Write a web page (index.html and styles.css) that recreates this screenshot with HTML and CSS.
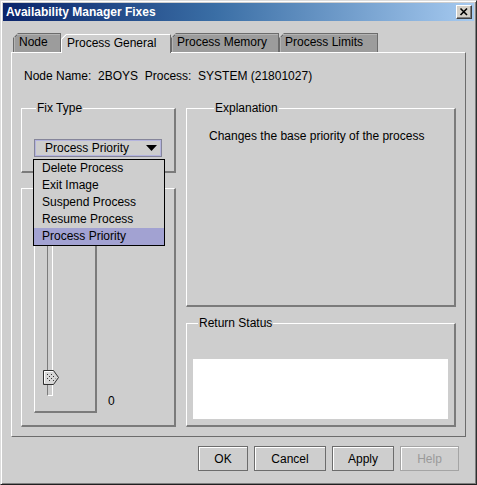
FILE: index.html
```html
<!DOCTYPE html>
<html lang="en">
<head>
    <meta charset="UTF-8">
    <title>Availability Manager Fixes</title>
    <link rel="stylesheet" href="styles.css">
</head>
<body>
    <div class="window">
        <div class="titlebar">
            <span class="title">Availability Manager Fixes</span>
            <span class="close">
                <svg width="14" height="12" viewBox="0 0 14 12">
                    <path d="M3.5 2.5 L10 9 M10 2.5 L3.5 9" stroke="#000" stroke-width="1.6" fill="none"/>
                </svg>
            </span>
        </div>

        <div class="client">
            <div class="tabs">
                <div class="tab tab-node">Node</div>
                <div class="tab selected tab-general">Process General</div>
                <div class="tab tab-memory">Process Memory</div>
                <div class="tab tab-limits">Process Limits</div>
            </div>

            <div class="panel">
                <div class="info">Node Name:&nbsp; 2BOYS&nbsp; Process:&nbsp; SYSTEM (21801027)</div>

                <div class="columns">
                    <div class="col">
                        <fieldset class="group fix-type">
                            <legend>Fix Type</legend>
                            <div class="combo-wrap">
                                <div class="combo">
                                    <span>Process Priority</span>
                                    <svg class="arrow" width="11" height="6" viewBox="0 0 11 6">
                                        <polygon points="0,0 11,0 5.5,6" fill="#000"/>
                                    </svg>
                                </div>
                                <ul class="popup">
                                    <li>Delete Process</li>
                                    <li>Exit Image</li>
                                    <li>Suspend Process</li>
                                    <li>Resume Process</li>
                                    <li class="active">Process Priority</li>
                                </ul>
                            </div>
                        </fieldset>

                        <fieldset class="group fix-value">
                            <legend>Fix Value</legend>
                            <div class="slider-row">
                                <div class="slider-box">
                                    <div class="track">
                                        <svg class="thumb" width="16" height="15" viewBox="0 0 16 15">
                                            <defs>
                                                <pattern id="dots" width="4" height="4" patternUnits="userSpaceOnUse">
                                                    <rect x="0" y="0" width="1" height="1" fill="#333"/>
                                                    <rect x="2" y="2" width="1" height="1" fill="#333"/>
                                                </pattern>
                                            </defs>
                                            <polygon points="0.5,0.5 10.5,0.5 15.5,7.5 10.5,14.5 0.5,14.5" fill="#d8d8d8" stroke="#303030"/>
                                            <path d="M1.5 13 V1.5 H10" stroke="#fff" fill="none"/>
                                            <polygon points="3,3 10,3 13,7.5 10,12 3,12" fill="url(#dots)"/>
                                        </svg>
                                    </div>
                                </div>
                                <span class="value">0</span>
                            </div>
                        </fieldset>
                    </div>

                    <div class="col">
                        <fieldset class="group explanation">
                            <legend>Explanation</legend>
                            <p>Changes the base priority of the process</p>
                        </fieldset>

                        <fieldset class="group status">
                            <legend>Return Status</legend>
                            <div class="status-box"></div>
                        </fieldset>
                    </div>
                </div>
            </div>

            <div class="buttons">
                <button class="btn btn-ok">OK</button>
                <button class="btn btn-cancel">Cancel</button>
                <button class="btn btn-apply">Apply</button>
                <button class="btn btn-help" disabled>Help</button>
            </div>
        </div>
    </div>
</body>
</html>
```

FILE: styles.css
```css
body {
    margin: 0;
    font-family: 'Liberation Sans', Arial, sans-serif;
    font-size: 12px;
    color: #000;
    background: #cecece;
}
.window {
    width: 477px;
    height: 485px;
    box-sizing: border-box;
    padding: 2px;
    background: #cecece;
    border: 1px solid;
    border-color: #dcdcdc #303030 #202020 #dcdcdc;
    box-shadow: inset 1px 1px 0 #fff, inset -1px -1px 0 #808080;
}
.titlebar {
    height: 18px;
    display: flex;
    align-items: center;
    justify-content: space-between;
    padding: 0 2px 0 3px;
    background: linear-gradient(to right, #0a246a 0%, #3a6ea5 45%, #a6caf0 100%);
}
.title {
    color: #fff;
    font-weight: bold;
    font-size: 12px;
    line-height: 18px;
}
.close {
    width: 16px;
    height: 14px;
    box-sizing: border-box;
    display: flex;
    align-items: center;
    justify-content: center;
    background: #d4d0c8;
    border: 1px solid;
    border-color: #fff #404040 #404040 #fff;
    box-shadow: inset -1px -1px 0 #808080;
}
.client {
    padding-top: 12px;
}
.tabs {
    display: flex;
    align-items: flex-end;
    height: 19px;
    margin: 0 8px 0 10px;
}
.tab {
    height: 19px;
    box-sizing: border-box;
    padding-left: 5px;
    line-height: 17px;
    white-space: nowrap;
    border: 1px solid #6c6c6c;
    border-bottom: 0;
    background: linear-gradient(135deg, transparent 3.5px, #6c6c6c 3.5px, #6c6c6c 4.4px, #9c9c9c 4.4px);
    background-origin: border-box;
    clip-path: polygon(5px 0, 100% 0, 100% 100%, 0 100%, 0 5px);
    box-shadow: inset 1px 1px 0 #b4b4b4;
}
.tab.selected {
    position: relative;
    z-index: 1;
    height: 19px;
    margin-bottom: -1px;
    border-color: #fff #6c6c6c #6c6c6c #fff;
    background: linear-gradient(135deg, transparent 3.5px, #fff 3.5px, #fff 4.4px, #cecece 4.4px);
    background-origin: border-box;
    box-shadow: none;
}
.tab-node { width: 48px; }
.tab-general { width: 110px; }
.tab-memory { width: 108px; }
.tab-limits { width: 99px; }

.panel {
    height: 385px;
    box-sizing: border-box;
    margin: 0 8px;
    padding: 16px 8px 9px 9px;
    border: 1px solid;
    border-color: #fff #6c6c6c #6c6c6c #fff;
}
.info {
    line-height: 14px;
    padding-left: 3px;
}
.columns {
    display: grid;
    grid-template-columns: 155px 270px;
    column-gap: 10px;
    height: 326px;
    margin-top: 18px;
}
.col {
    display: flex;
    flex-direction: column;
}
.group {
    margin: 0;
    padding: 0;
    min-width: 0;
    box-sizing: border-box;
    border-style: solid;
    border-width: 1px 2px 2px 1px;
    border-color: #fff #7b7b7b #7b7b7b #fff;
}
.group legend {
    padding: 0 1px;
    margin-left: 2px;
    line-height: 14px;
}
.fix-type {
    height: 72px;
    padding: 24px 0 0 12px;
}
.fix-value {
    flex: 1;
    margin-top: 8px;
    padding: 10px 0 12px 12px;
    display: flex;
    flex-direction: column;
}
.explanation {
    height: 206px;
    padding: 14px 0 0 22px;
}
.explanation legend,
.status legend {
    margin-left: 5px;
}
.explanation p {
    margin: 0;
    line-height: 14px;
}
.status {
    flex: 1;
    margin-top: 9px;
    padding: 6px;
    display: flex;
    flex-direction: column;
}
.status-box {
    margin-top: auto;
    height: 60px;
    background: #fff;
}

.combo-wrap {
    position: relative;
    width: 128px;
}
.combo {
    height: 18px;
    box-sizing: border-box;
    display: flex;
    align-items: center;
    justify-content: space-between;
    padding: 0 4px 0 10px;
    border: 1px solid #85859a;
    box-shadow: inset 0 0 0 1px #b4b4de;
    line-height: 14px;
}
.popup {
    position: absolute;
    top: 20px;
    left: -1px;
    z-index: 10;
    width: 132px;
    box-sizing: border-box;
    margin: 0;
    padding: 0;
    list-style: none;
    background: #cecece;
    border: 1px solid #000;
}
.popup li {
    height: 17px;
    line-height: 17px;
    padding-left: 8px;
}
.popup li.active {
    background: #a2a2d2;
}

.slider-row {
    flex: 1;
    display: flex;
}
.slider-box {
    width: 63px;
    box-sizing: border-box;
    display: flex;
    padding: 8px 0 15px 12px;
    border-style: solid;
    border-width: 1px 2px 2px 1px;
    border-color: #fff #7b7b7b #7b7b7b #fff;
}
.track {
    position: relative;
    width: 6px;
    box-sizing: border-box;
    border: 1px solid;
    border-color: #7b7b7b #fff #fff #7b7b7b;
}
.thumb {
    position: absolute;
    left: -5px;
    bottom: 10px;
    display: block;
}
.value {
    align-self: flex-end;
    margin: 0 0 5px 11px;
    line-height: 14px;
}

.buttons {
    display: flex;
    justify-content: flex-end;
    gap: 6px;
    margin: 9px 15px 0 0;
}
.btn {
    height: 25px;
    box-sizing: border-box;
    padding: 0;
    font-family: inherit;
    font-size: 12px;
    color: #000;
    background: #cecece;
    border: 1px solid #6c6c6c;
    box-shadow: inset 1px 1px 0 #fff;
}
.btn:disabled {
    color: #9a9a9a;
    border-color: #a4a4a4;
}
.btn-ok { width: 50px; }
.btn-cancel { width: 72px; }
.btn-apply { width: 62px; }
.btn-help { width: 59px; }
```
